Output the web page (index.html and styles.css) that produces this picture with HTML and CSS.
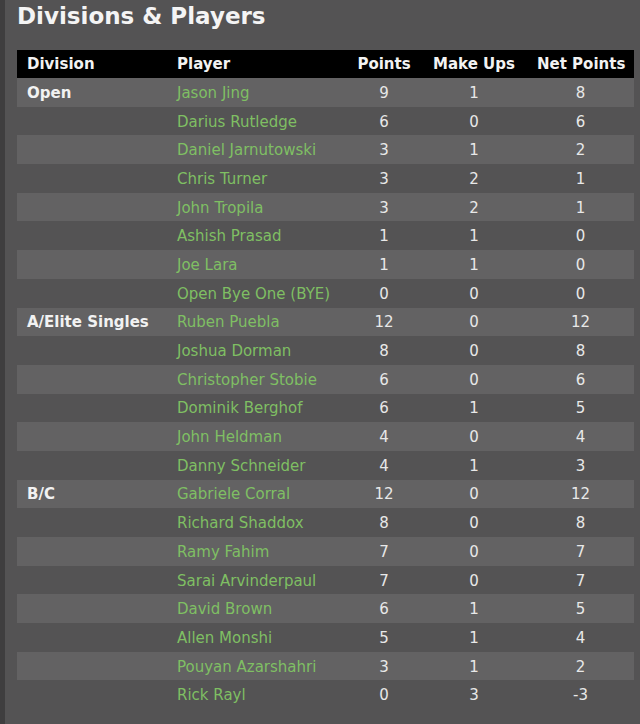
FILE: index.html
```html
<!DOCTYPE html>
<html>
<head>
<meta charset="utf-8">
<link rel="stylesheet" href="styles.css">
</head>
<body>
<div class="page">
  <h2 class="title">Divisions &amp; Players</h2>
  <table class="standings">
    <colgroup>
      <col class="c-div"><col class="c-player"><col class="c-pts"><col class="c-mu"><col class="c-net">
    </colgroup>
    <thead>
      <tr><th class="left">Division</th><th class="left">Player</th><th>Points</th><th>Make Ups</th><th>Net Points</th></tr>
    </thead>
    <tbody>
      <tr><td class="div">Open</td><td class="player">Jason Jing</td><td>9</td><td>1</td><td>8</td></tr>
      <tr><td class="div"></td><td class="player">Darius Rutledge</td><td>6</td><td>0</td><td>6</td></tr>
      <tr><td class="div"></td><td class="player">Daniel Jarnutowski</td><td>3</td><td>1</td><td>2</td></tr>
      <tr><td class="div"></td><td class="player">Chris Turner</td><td>3</td><td>2</td><td>1</td></tr>
      <tr><td class="div"></td><td class="player">John Tropila</td><td>3</td><td>2</td><td>1</td></tr>
      <tr><td class="div"></td><td class="player">Ashish Prasad</td><td>1</td><td>1</td><td>0</td></tr>
      <tr><td class="div"></td><td class="player">Joe Lara</td><td>1</td><td>1</td><td>0</td></tr>
      <tr><td class="div"></td><td class="player">Open Bye One (BYE)</td><td>0</td><td>0</td><td>0</td></tr>
      <tr><td class="div">A/Elite Singles</td><td class="player">Ruben Puebla</td><td>12</td><td>0</td><td>12</td></tr>
      <tr><td class="div"></td><td class="player">Joshua Dorman</td><td>8</td><td>0</td><td>8</td></tr>
      <tr><td class="div"></td><td class="player">Christopher Stobie</td><td>6</td><td>0</td><td>6</td></tr>
      <tr><td class="div"></td><td class="player">Dominik Berghof</td><td>6</td><td>1</td><td>5</td></tr>
      <tr><td class="div"></td><td class="player">John Heldman</td><td>4</td><td>0</td><td>4</td></tr>
      <tr><td class="div"></td><td class="player">Danny Schneider</td><td>4</td><td>1</td><td>3</td></tr>
      <tr><td class="div">B/C</td><td class="player">Gabriele Corral</td><td>12</td><td>0</td><td>12</td></tr>
      <tr><td class="div"></td><td class="player">Richard Shaddox</td><td>8</td><td>0</td><td>8</td></tr>
      <tr><td class="div"></td><td class="player">Ramy Fahim</td><td>7</td><td>0</td><td>7</td></tr>
      <tr><td class="div"></td><td class="player">Sarai Arvinderpaul</td><td>7</td><td>0</td><td>7</td></tr>
      <tr><td class="div"></td><td class="player">David Brown</td><td>6</td><td>1</td><td>5</td></tr>
      <tr><td class="div"></td><td class="player">Allen Monshi</td><td>5</td><td>1</td><td>4</td></tr>
      <tr><td class="div"></td><td class="player">Pouyan Azarshahri</td><td>3</td><td>1</td><td>2</td></tr>
      <tr><td class="div"></td><td class="player">Rick Rayl</td><td>0</td><td>3</td><td>-3</td></tr>
    </tbody>
  </table>
</div>
</body>
</html>
```
FILE: styles.css
```css
html, body {
  margin: 0;
  padding: 0;
  background: #545354;
}
body {
  font-family: "DejaVu Sans", Verdana, sans-serif;
  color: #eeeeee;
  border-left: 5px solid #3f3e3f;
  min-height: 724px;
  box-sizing: border-box;
}
.page {
  padding: 0 6px 0 12px;
}
.title {
  margin: 0;
  padding-top: 3px;
  height: 46px;
  font-size: 23px;
  font-weight: bold;
  color: #f4f4f4;
  line-height: 27px;
}
.standings {
  border-collapse: collapse;
  table-layout: fixed;
  width: 617px;
  font-size: 15px;
  margin-top: 1px;
}
.c-div { width: 150px; }
.c-player { width: 180px; }
.c-pts { width: 74px; }
.c-mu { width: 106px; }
.c-net { width: 107px; }
.standings th {
  background: #000;
  color: #f2f2f2;
  font-weight: bold;
  height: 28px;
  padding: 0 10px;
  text-align: center;
  white-space: nowrap;
}
.standings th.left { text-align: left; }
.standings td {
  box-sizing: border-box;
  height: 28.7px;
  padding: 1px 10px 0;
  text-align: center;
  color: #e8e8e8;
  white-space: nowrap;
}
.standings td.div {
  text-align: left;
  font-weight: bold;
  color: #f2f2f2;
}
.standings td.player {
  text-align: left;
  color: #7fbf63;
}
.standings tbody tr:nth-child(odd) td { background: #636263; }
```
